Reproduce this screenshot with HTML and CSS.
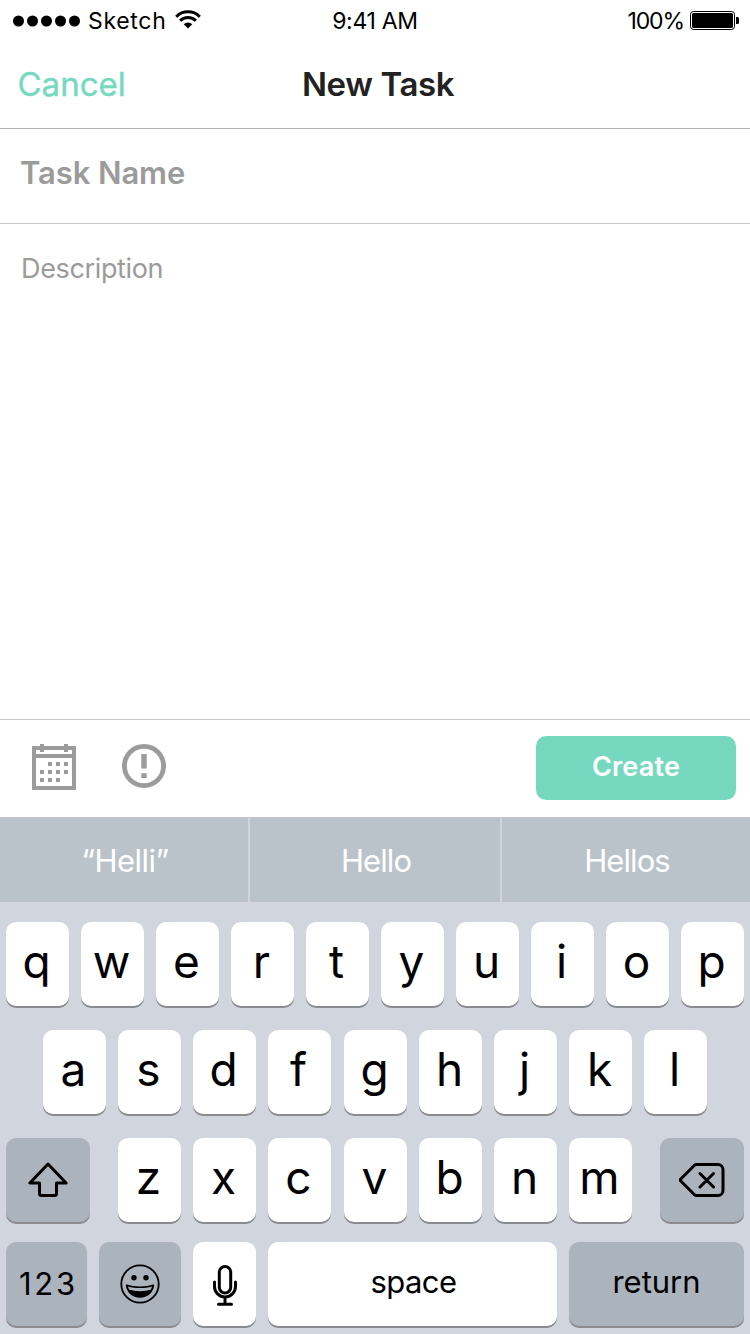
FILE: index.html
```
<!DOCTYPE html>
<html lang="en">
<head>
<meta charset="utf-8">
<title>New Task</title>
<link rel="stylesheet" href="styles.css">
</head>
<body>
<main class="screen">
  <header class="header">
    <div class="status">
      <div class="carrier">
        <svg class="dots" width="68" height="12" viewBox="0 0 68 12"><circle cx="5.5" cy="6" r="5.5"/><circle cx="19.5" cy="6" r="5.5"/><circle cx="33.5" cy="6" r="5.5"/><circle cx="47.5" cy="6" r="5.5"/><circle cx="61.5" cy="6" r="5.5"/></svg>
        <span class="carrier-name">Sketch</span>
        <svg class="wifi" width="26" height="19" viewBox="0 0 26 19"><path d="M1.2 6.7a16.8 16.8 0 0 1 23.6 0M5.1 10.8a11.2 11.2 0 0 1 15.8 0" fill="none" stroke="#000" stroke-width="3"/><path d="M13 18.500 8.700 14.200a6 6 0 0 1 8.600 0z"/></svg>
      </div>
      <span class="clock">9:41 AM</span>
      <div class="power">
        <span class="percent">100%</span>
        <svg class="battery" width="50" height="20" viewBox="0 0 50 20"><rect x=".5" y="1.500" width="44" height="18" rx="3" fill="none" stroke="#000"/><rect x="2" y="3" width="41" height="15" rx="1.500"/><path d="M46 7h1.500a1.500 1.500 0 0 1 1.500 1.500v4a1.500 1.500 0 0 1-1.500 1.500H46z"/></svg>
      </div>
    </div>
    <nav class="nav">
      <span class="cancel">Cancel</span>
      <h1 class="title">New Task</h1>
    </nav>
  </header>
  <section class="name-field"><span class="name-label">Task Name</span></section>
  <section class="description-field"><span class="description-label">Description</span></section>
  <section class="toolbar">
    <svg class="calendar" width="44" height="46" viewBox="0 0 44 46" fill="#9b9b9b"><path fill-rule="evenodd" d="M0 2h8V0h4v2h20V0h4v2h8v44H0zM4 6v4h36V6h-4v2h-4V6H12v2H8V6zM4 14v28h36V14z"/><path d="M16 18h4v4h-4zM24 18h4v4h-4zM32 18h4v4h-4zM8 26h4v4H8zM16 26h4v4h-4zM24 26h4v4h-4zM32 26h4v4h-4zM8 34h4v4H8zM16 34h4v4h-4zM24 34h4v4h-4z"/></svg>
    <svg class="priority" width="44" height="44" viewBox="0 0 44 44"><circle cx="22" cy="22" r="19.600" fill="none" stroke="#9b9b9b" stroke-width="4.800"/><path d="M19.300 10h5.400v14.500h-5.400zM19.300 29.300h5.400V34h-5.400z" fill="#9b9b9b"/></svg>
    <button class="create"><span class="create-label">Create</span></button>
  </section>
  <section class="keyboard">
    <div class="suggestions">
      <div class="suggestion"><span class="word word-quoted">“Helli”</span></div>
      <div class="suggestion"><span class="word">Hello</span></div>
      <div class="suggestion"><span class="word">Hellos</span></div>
    </div>
    <div class="keys">
      <div class="row">
        <span class="key">q</span><span class="key">w</span><span class="key">e</span><span class="key">r</span><span class="key">t</span><span class="key">y</span><span class="key">u</span><span class="key">i</span><span class="key">o</span><span class="key">p</span>
      </div>
      <div class="row row-home">
        <span class="key">a</span><span class="key">s</span><span class="key">d</span><span class="key">f</span><span class="key key-offset">g</span><span class="key">h</span><span class="key">j</span><span class="key">k</span><span class="key">l</span>
      </div>
      <div class="row row-shift">
        <span class="key key-dark key-side"><svg width="40" height="36" viewBox="0 0 40 36" fill="none" stroke="#000" stroke-width="3" stroke-linejoin="round"><path d="M20 2 1.900 21H11.500V31.500a2 2 0 0 0 2 2h13a2 2 0 0 0 2-2V21H38.100z"/></svg></span>
        <div class="letters"><span class="key">z</span><span class="key">x</span><span class="key">c</span><span class="key key-offset">v</span><span class="key">b</span><span class="key">n</span><span class="key">m</span></div>
        <span class="key key-dark key-side"><svg width="46" height="36" viewBox="0 0 46 36" fill="none" stroke="#000" stroke-width="3" stroke-linejoin="round" stroke-linecap="round"><path d="M17.500 2.500H39a5 5 0 0 1 5 5v21a5 5 0 0 1-5 5H17.500a3 3 0 0 1-2-.8L1.500 18.800a1.200 1.200 0 0 1 0-1.600L15.500 3.300a3 3 0 0 1 2-.8zM21 11.500l13.500 13.500M34.500 11.500 21 25"/></svg></span>
      </div>
      <div class="row row-bottom">
        <span class="key key-dark key-numbers"><span class="numbers">123</span></span>
        <span class="key key-dark key-emoji"><svg width="40" height="40" viewBox="0 0 40 40"><circle cx="20" cy="20" r="18.700" fill="none" stroke="#000" stroke-width="1.800"/><circle cx="14" cy="13.800" r="2.700"/><circle cx="26" cy="13.800" r="2.700"/><path fill-rule="evenodd" d="M7 20.500C14 23 26 23 33 20.500c.8-.2 1.300.2 1.200 1C33 29 27.500 33.700 20 33.700S7 29 5.800 21.500c-.1-.8.400-1.200 1.200-1zM8 22.400c.3 1.300.7 2.400 1.300 3.400 6 1.800 15.400 1.800 21.400 0 .6-1 1-2.100 1.300-3.400-7 2-17 2-24 0z"/></svg></span>
        <span class="key key-mic"><svg width="24" height="41" viewBox="0 0 24 41" fill="none" stroke="#000" stroke-width="3" stroke-linecap="round"><rect x="6.300" y="1.500" width="11.400" height="26.500" rx="5.700"/><path d="M1.500 17v4.500a10.500 10.500 0 0 0 21 0V17M12 32v7M5.500 39.300h13"/></svg></span>
        <span class="key key-space"><span class="space-label">space</span></span>
        <span class="key key-dark key-return"><span class="return-label">return</span></span>
      </div>
    </div>
  </section>
</main>
</body>
</html>
```
FILE: styles.css
```
* { box-sizing: border-box; }
body { margin: 0; background: #fff; font-family: Inter, "Liberation Sans", sans-serif; color: #000; }
svg { display: block; flex: none; }
.screen { width: 750px; height: 1334px; display: flex; flex-direction: column; overflow: hidden; }

.header { height: 129px; border-bottom: 1px solid #b2b2b2; flex: none; }
.status { height: 40px; display: grid; grid-template-columns: 1fr auto 1fr; font-size: 23px; line-height: 42px; white-space: nowrap; }
.carrier { display: flex; padding-left: 13px; }
.dots { margin-top: 15px; }
.carrier-name { margin-left: 7px; letter-spacing: 0.7px; }
.wifi { margin: 10px 0 0 8px; }
.clock { letter-spacing: -0.3px; }
.power { display: flex; justify-content: flex-end; padding-right: 10px; }
.percent { letter-spacing: -1.1px; }
.battery { margin: 10px 0 0 6px; }

.nav { height: 88px; display: grid; grid-template-columns: 1fr auto 1fr; font-size: 33px; line-height: 88px; white-space: nowrap; }
.cancel { padding-left: 17.5px; color: #76d9bf; -webkit-text-stroke: 0.4px #76d9bf; }
.title { margin: 0; font-size: 33px; font-weight: 600; letter-spacing: -0.4px; color: #222; padding-left: 6px; }

.name-field { height: 95px; border-bottom: 1px solid #c8c7cc; padding: 14px 0 0 20px; flex: none; }
.name-label { display: block; font-size: 31px; line-height: 60px; font-weight: 600; letter-spacing: -0.1px; color: #9b9b9b; }
.description-field { flex: 1; padding: 15px 0 0 21px; }
.description-label { display: block; font-size: 27px; line-height: 60px; letter-spacing: -0.35px; color: #9b9b9b; }

.toolbar { height: 98px; border-top: 1px solid #c8c7cc; display: flex; align-items: flex-start; padding: 0 14px 0 32px; flex: none; }
.calendar { margin-top: 24px; }
.priority { margin: 24px 0 0 46px; }
.create { margin: 16px 0 0 auto; width: 200px; height: 64px; border: 0; border-radius: 10px; background: #76d9bf; color: #fff; padding: 0 0 3px; font: 600 27px/61px Inter, "Liberation Sans", sans-serif; }
.create-label { letter-spacing: 0.2px; }

.keyboard { height: 517px; flex: none; background: #d1d5dd; border-top: 1px solid #c2c5ca; }
.suggestions { height: 84px; display: grid; grid-template: 84px / 248px 250px 248px; column-gap: 2px; }
.suggestion { background: #bbc3ca; color: #fff; text-align: center; font-size: 31px; line-height: 86px; height: 84px; padding-left: 2px; }
.word { letter-spacing: -0.9px; }
.word-quoted { letter-spacing: -0.5px; }

.keys { padding: 20px 6px 0; display: grid; grid-template-rows: 84px 84px 84px 84px; row-gap: 24px; }
.row { display: flex; gap: 12px; }
.row-home { padding-left: 37px; }
.row-shift { justify-content: space-between; }
.row-bottom { margin-top: -4px; height: 84px; }
.letters { display: flex; gap: 12px; }
.key { width: 63px; height: 84px; flex: none; display: flex; align-items: center; justify-content: center; background: #fff; border-radius: 10px; box-shadow: 0 2px 0 #898b8f; font-size: 46px; line-height: 78px; padding: 0 2px 6px 0; }
.key-offset { margin-left: 1px; }
.key-dark { background: #abb3bd; }
.key-side { width: 84px; padding: 0; }
.key-numbers { width: 81px; font-size: 31px; padding: 0; }
.key-emoji { width: 82px; padding: 0 0 1px; }
.key-mic { padding: 2px 0 0; }
.key-space { width: 289px; font-size: 31px; padding: 0 0 5px 2px; }
.key-return { width: 175px; font-size: 31px; padding: 0 0 5px; }
.numbers { letter-spacing: 2.8px; padding-left: 4px; }
.space-label { letter-spacing: -0.6px; }
```
